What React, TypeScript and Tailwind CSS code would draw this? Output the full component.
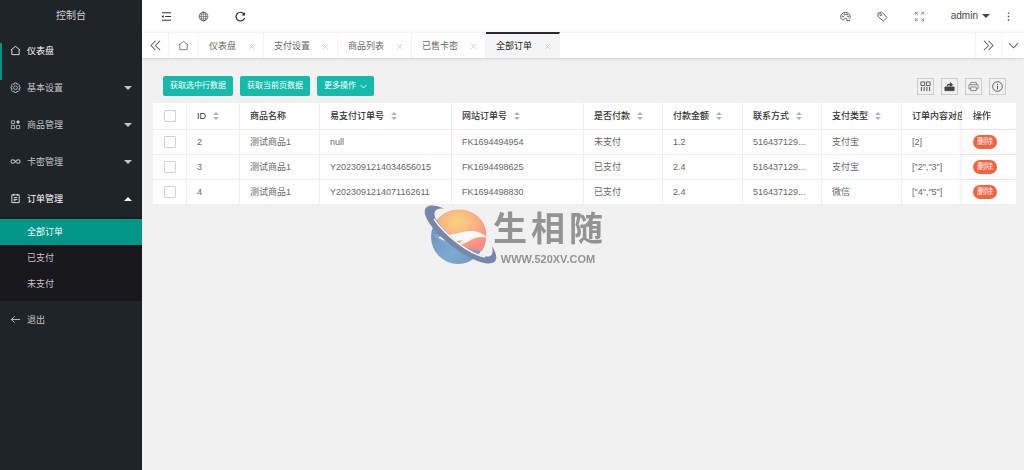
import { useState } from 'react';
import type { ReactNode } from 'react';

type IconProps = { className?: string; children: ReactNode };

function Icon({ className = 'size-[11px]', children }: IconProps) {
  return (
    <svg
      viewBox="0 0 24 24"
      fill="none"
      stroke="currentColor"
      strokeWidth="1.8"
      aria-hidden="true"
      className={`shrink-0 ${className}`}
    >
      {children}
    </svg>
  );
}

const homePath = <path d="M2 11 12 3l10 8M4 10v11h16V10" />;
const gearPath = (
  <>
    <path d="M10 2h4l1 3 3-1 3 3-2 3 3 1v3l-3 1 2 3-3 3-3-1-1 3h-4l-1-3-3 1-3-3 2-3-3-1v-3l3-1-2-3 3-3 3 1z" />
    <circle cx="12" cy="12.500" r="4" />
  </>
);
const gridPath = (
  <>
    <path d="M3 4h7v6H3zM3 14h7v7H3zM14 14h7v7h-7z" />
    <path d="m17.500 2 4.500 4.500-4.500 4.500L13 6.500z" fill="currentColor" stroke="none" />
  </>
);
const linkPath = (
  <path d="M12 12c-2-3-4-4-6-4a4 4 0 0 0 0 8c2 0 4-1 6-4s4-4 6-4a4 4 0 0 1 0 8c-2 0-4-1-6-4z" strokeWidth="2.2" />
);
const formPath = <path d="M4 4h16v17H4zM8 2v4M16 2v4M8 10h8M8 14h8M8 17h4" />;
const backPath = <path d="M22 12H3M10 5l-7 7 7 7" strokeWidth="2" />;

const menu = [
  { label: '仪表盘', icon: homePath, bright: true },
  { label: '基本设置', icon: gearPath, arrow: 'down' },
  { label: '商品管理', icon: gridPath, arrow: 'down' },
  { label: '卡密管理', icon: linkPath, arrow: 'down' },
  { label: '订单管理', icon: formPath, arrow: 'up', bright: true },
];

function Sidebar() {
  const [active, setActive] = useState('全部订单');
  return (
    <aside className="w-[142px] shrink-0 bg-[#1f2428] text-[#c4c5c7]">
      <h1 className="flex h-8 items-center justify-center text-[10px] text-[#d0d1d3]">控制台</h1>
      <nav>
        {menu.map((item, i) => (
          <button
            key={item.label}
            type="button"
            className={`relative flex h-[37px] w-full items-center gap-[6px] pr-[10px] pl-[10px] text-left ${item.bright ? 'text-white' : ''}`}
          >
            {i === 0 && <span className="absolute top-[11px] left-0 h-[37px] w-[2px] bg-[#009688]" />}
            <Icon>{item.icon}</Icon>
            <span className="flex-1">{item.label}</span>
            {item.arrow && (
              <svg viewBox="0 0 8 4" className={`h-1 w-2 ${item.arrow === 'up' ? 'rotate-180' : ''}`} aria-hidden="true">
                <path d="M0 0h8L4 4z" fill="currentColor" />
              </svg>
            )}
          </button>
        ))}
        <div className="bg-[#17171c] pt-[2px] pb-1">
          {['全部订单', '已支付', '未支付'].map((label) => (
            <button
              key={label}
              type="button"
              onClick={() => setActive(label)}
              className={`flex h-[26px] w-full items-center pl-[27px] ${active === label ? 'bg-[#009688] text-white' : ''}`}
            >
              {label}
            </button>
          ))}
        </div>
        <button type="button" className="flex h-[37px] w-full items-center gap-[6px] pl-[10px]">
          <Icon>{backPath}</Icon>
          退出
        </button>
      </nav>
    </aside>
  );
}

function TopBar() {
  return (
    <header className="flex h-8 items-center justify-between bg-white text-[#444]">
      <div className="flex items-center text-[#333]">
        <button type="button" aria-label="侧边伸缩" className="flex w-[37px] justify-center pl-3">
          <Icon>
            <path d="M2 4h20M9 12h13M2 20h20" strokeWidth="2.200" />
            <path d="m1 12 5-3.500v7z" fill="currentColor" stroke="none" />
          </Icon>
        </button>
        <button type="button" aria-label="前台" className="flex w-[37px] justify-center pl-3">
          <Icon className="size-[11px] text-[#555]">
            <circle cx="12" cy="12" r="9.500" />
            <path d="M2.500 12h19M12 2.500v19M4 7h16M4 17h16" strokeWidth="1.300" />
            <ellipse cx="12" cy="12" rx="5" ry="9.500" />
          </Icon>
        </button>
        <button type="button" aria-label="刷新" className="flex w-[37px] justify-center pl-3">
          <Icon>
            <path d="M19.500 6.500A9.500 9.500 0 1 0 21 15" strokeWidth="2.600" />
            <path d="M22 2v8h-8z" fill="currentColor" stroke="none" />
          </Icon>
        </button>
      </div>
      <div className="flex items-center">
        <button type="button" aria-label="主题" className="flex w-[37px] justify-center">
          <Icon>
            <path d="M21 17c1-1.500 1.500-3 1.500-5C22 6.500 17.500 3 12 3 6 3 1.500 7 1.500 12.500c0 4 2.500 7 5.500 7 2.500 0 2-4 5-4 2 0 3 1 3 2.500V21h7" />
            <circle cx="6.500" cy="12" r="1.300" />
            <circle cx="10" cy="7.500" r="1.300" />
            <circle cx="15" cy="7.500" r="1.300" />
            <circle cx="18" cy="12" r="1.300" />
          </Icon>
        </button>
        <button type="button" aria-label="便签" className="flex w-[37px] justify-center">
          <Icon>
            <path d="M2 5l8-3 12 12-8 8L2 12z" />
            <circle cx="8" cy="8" r="2" />
          </Icon>
        </button>
        <button type="button" aria-label="全屏" className="flex w-[37px] justify-center text-[#888]">
          <Icon>
            <path d="M3 8V3h5M3 3l6 6M16 3h5v5M21 3l-6 6M3 16v5h5M3 21l6-6M21 16v5h-5M21 21l-6-6" />
          </Icon>
        </button>
        <button type="button" className="flex items-center gap-1 pr-[7px] pl-[13px] text-[10px]">
          admin
          <svg viewBox="0 0 8 4" className="h-1 w-2" aria-hidden="true">
            <path d="M0 0h8L4 4z" fill="currentColor" />
          </svg>
        </button>
        <button type="button" aria-label="更多" className="flex w-[27px] justify-center pr-1">
          <Icon>
            <path d="M10.500 3h3v3h-3zM10.500 10.500h3v3h-3zM10.500 18h3v3h-3z" fill="currentColor" stroke="none" />
          </Icon>
        </button>
      </div>
    </header>
  );
}

function TabBar() {
  const [active, setActive] = useState('全部订单');
  return (
    <div className="flex h-[26px] border-t border-[#f4f4f4] bg-white text-[#666] shadow-sm">
      <button type="button" aria-label="向左" className="flex w-[27px] items-center justify-center border-r border-[#f4f4f4]">
        <Icon>
          <path d="M12 2 2 12l10 10M22 2 12 12l10 10" strokeWidth="2.200" />
        </Icon>
      </button>
      <button type="button" aria-label="主页" className="flex w-[30px] items-center justify-center border-r border-[#f4f4f4]">
        <Icon>{homePath}</Icon>
      </button>
      <div className="flex flex-1">
        {['仪表盘', '支付设置', '商品列表', '已售卡密', '全部订单'].map((label) => (
          <div
            key={label}
            className={`-mt-px flex items-center gap-3 border-t-2 border-r border-r-[#f4f4f4] pr-2 pl-[10px] ${
              active === label ? 'border-t-[#292b34] bg-[#f5f5f5] text-[#222]' : 'border-t-transparent'
            }`}
          >
            <button type="button" onClick={() => setActive(label)}>
              {label}
            </button>
            <button type="button" aria-label={`关闭${label}`} className="text-[#c8c8c8]">
              <Icon className="size-[7px]">
                <path d="m4 4 16 16M20 4 4 20" strokeWidth="3" />
              </Icon>
            </button>
          </div>
        ))}
      </div>
      <button type="button" aria-label="向右" className="flex w-[27px] items-center justify-center border-x border-[#f4f4f4]">
        <Icon>
          <path d="m2 2 10 10L2 22M12 2l10 10-10 10" strokeWidth="2.200" />
        </Icon>
      </button>
      <button type="button" aria-label="标签操作" className="flex w-[22px] items-center justify-center">
        <Icon>
          <path d="m2 7 10 10L22 7" strokeWidth="2.200" />
        </Icon>
      </button>
    </div>
  );
}

const tools = [
  {
    label: '筛选列',
    icon: (
      <>
        <path d="M2 2h8v8H2zM14 2h8v8h-8z" />
        <path d="M3 13v9M9 13v9M15 13v9M21 13v9" strokeWidth="2" />
      </>
    ),
  },
  {
    label: '导出',
    icon: (
      <>
        <path d="M2 13h20v8H2z" fill="currentColor" />
        <path d="M6 12c0-5 3-6 7-6V2l7 6-7 5v-3c-3 0-5 0-7 2z" fill="currentColor" stroke="none" />
      </>
    ),
  },
  { label: '打印', icon: <path d="M6 8V3h12v5M6 17H2V8h20v9h-4M6 13h12v8H6z" className="text-[#777]" stroke="currentColor" /> },
  {
    label: '提示',
    icon: (
      <>
        <circle cx="12" cy="12" r="10.500" />
        <path d="M12 6v3M12 11v7" strokeWidth="2" />
      </>
    ),
  },
];

function Toolbar() {
  const button = 'flex h-5 items-center rounded-[2px] bg-[#16baaa] px-[7px] text-[8px] text-white';
  return (
    <div className="flex items-center justify-between px-[10px] pb-[7px]">
      <div className="flex gap-[7px]">
        <button type="button" className={button}>获取选中行数据</button>
        <button type="button" className={button}>获取当前页数据</button>
        <button type="button" className={`${button} gap-1`}>
          更多操作
          <Icon className="size-[7px]">
            <path d="m2 7 10 10L22 7" strokeWidth="3" />
          </Icon>
        </button>
      </div>
      <div className="flex gap-[7px]">
        {tools.map((tool) => (
          <button
            key={tool.label}
            type="button"
            aria-label={tool.label}
            className="flex size-[17px] items-center justify-center border border-[#ccc] text-[#444]"
          >
            <Icon>{tool.icon}</Icon>
          </button>
        ))}
      </div>
    </div>
  );
}

const columns = [
  { title: 'ID', sort: true, width: 'w-[53px]' },
  { title: '商品名称', sort: false, width: 'w-[80px]' },
  { title: '易支付订单号', sort: true, width: 'w-[132px]' },
  { title: '网站订单号', sort: true, width: 'w-[132px]' },
  { title: '是否付款', sort: true, width: 'w-[79px]' },
  { title: '付款金额', sort: true, width: 'w-[80px]' },
  { title: '联系方式', sort: true, width: 'w-[79px]' },
  { title: '支付类型', sort: true, width: 'w-[80px]' },
  { title: '订单内容对应', sort: false, width: 'w-[132px]' },
];

const rows = [
  ['2', '测试商品1', 'null', 'FK1694494954', '未支付', '1.2', '516437129...', '支付宝', '[2]'],
  ['3', '测试商品1', 'Y2023091214034656015', 'FK1694498625', '已支付', '2.4', '516437129...', '支付宝', '["2","3"]'],
  ['4', '测试商品1', 'Y2023091214071162611', 'FK1694498830', '已支付', '2.4', '516437129...', '微信', '["4","5"]'],
];

function CheckBox({ label }: { label: string }) {
  return (
    <input
      type="checkbox"
      aria-label={label}
      className="mx-auto block size-3 appearance-none rounded-[1px] border border-[#d2d2d2] bg-white checked:bg-[#16baaa]"
    />
  );
}

function OrderTable() {
  const line = 'border-r border-b border-[#eee]';
  const pinned = 'sticky right-0 w-[54px] border-b border-[#eee] bg-white pl-[11px] text-left shadow-[-1px_0_4px_rgba(0,0,0,0.08)]';
  return (
    <div className="overflow-x-auto bg-white [scrollbar-width:none]">
      <table className="w-full min-w-[935px] table-fixed border-separate border-spacing-0 text-[#666]">
        <thead>
          <tr className="h-[27px] text-[#333]">
            <th className={`w-[34px] ${line}`}>
              <CheckBox label="全选" />
            </th>
            {columns.map((col) => (
              <th key={col.title} className={`px-[10px] text-left font-medium whitespace-nowrap ${col.width} ${line}`}>
                <span className="flex items-center gap-[7px]">
                  {col.title}
                  {col.sort && (
                    <svg viewBox="0 0 6 8" className="h-2 w-[6px] shrink-0" aria-hidden="true">
                      <path d="M0 3h6L3 0zM0 5h6L3 8z" fill="#b2b2b2" />
                    </svg>
                  )}
                </span>
              </th>
            ))}
            <th className={`font-medium ${pinned}`}>操作</th>
          </tr>
        </thead>
        <tbody>
          {rows.map((row) => (
            <tr key={row[0]} className="h-[25px]">
              <td className={line}>
                <CheckBox label={`选择订单 ${row[0]}`} />
              </td>
              {row.map((cell, i) => (
                <td key={columns[i].title} className={`px-[10px] whitespace-nowrap ${line}`}>
                  {cell}
                </td>
              ))}
              <td className={pinned}>
                <button type="button" className="flex h-[14px] items-center rounded-full bg-[#f4623f] px-1 text-[8px] text-white">
                  删除
                </button>
              </td>
            </tr>
          ))}
        </tbody>
      </table>
    </div>
  );
}

function Watermark() {
  return (
    <div className="pointer-events-none fixed inset-0 flex items-center justify-center">
      <div className="flex opacity-60">
        <svg viewBox="0 0 76 62" className="-mr-1 h-[62px] w-[76px]" aria-hidden="true">
          <defs>
            <radialGradient id="sun" cx="0.45" cy="0.3" r="0.7">
              <stop offset="0" stopColor="#ffc02c" />
              <stop offset="0.5" stopColor="#ff8a3c" />
              <stop offset="1" stopColor="#fb4a3c" />
            </radialGradient>
            <linearGradient id="sea" x1="0" y1="0" x2="1" y2="1">
              <stop offset="0" stopColor="#1c3f85" />
              <stop offset="0.6" stopColor="#2d7dc4" />
              <stop offset="1" stopColor="#204c92" />
            </linearGradient>
          </defs>
          <circle cx="37" cy="33" r="27" fill="url(#sea)" />
          <path d="M13 21C20 7 38 1 52 9c14 8 17 24 9 38-12 0-34-10-48-26z" fill="url(#sun)" />
          <path d="M11 29c8 11 24 17 38 17-8-3-12-4-14-6z" fill="#2d7dc4" />
          <path d="M17 33c11-1 24-6 34-6 7 0 13 4 16 7-6-2-11-1-15 1-6 3-10 6-18 6 4-1 6-3 7-5-8 2-17 3-24-3z" fill="#fff" />
          <path d="M24 5C6-3-1 4 7 17c10 17 38 38 56 42 14 3 15-6 8-17 2 9-1 12-9 10C47 48 24 30 15 15 11 8 15 3 24 5z" fill="#24437f" />
          <path d="M13 15c11 16 35 35 51 38" fill="none" stroke="#fff" strokeWidth="1.500" />
        </svg>
        <div className="flex flex-col items-center text-[#555]">
          <div className="flex gap-1 pt-1 font-['Liberation_Serif','Noto_Sans_CJK_SC',serif] text-[34px] leading-[44px] font-bold">
            <span>生</span>
            <span>相</span>
            <span>随</span>
          </div>
          <div className="text-[11px] leading-[14px] font-bold">WWW.520XV.COM</div>
        </div>
      </div>
    </div>
  );
}

export default function App() {
  return (
    <div className="flex min-h-screen bg-[#f1f1f1] font-['Liberation_Sans','Noto_Sans_CJK_SC',sans-serif] text-[9px] leading-[14px]">
      <Sidebar />
      <div className="flex min-w-0 flex-1 flex-col">
        <TopBar />
        <TabBar />
        <main className="pt-[18px] pr-2 pl-[11px]">
          <Toolbar />
          <OrderTable />
        </main>
      </div>
      <Watermark />
    </div>
  );
}
